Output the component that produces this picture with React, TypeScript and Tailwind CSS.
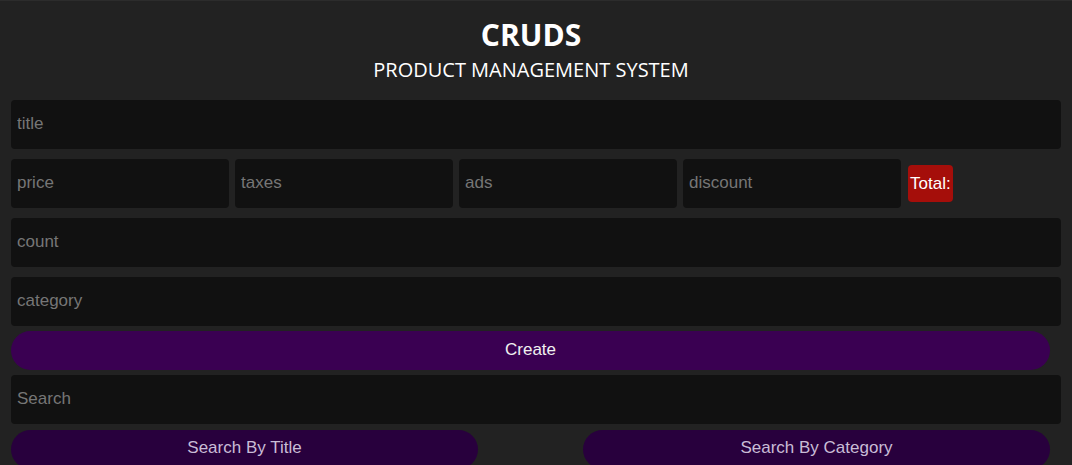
const fields = ['price', 'taxes', 'ads', 'discount'];

function Field({ placeholder, className = '' }: { placeholder: string; className?: string }) {
  return (
    <input
      placeholder={placeholder}
      className={`h-[49px] rounded-[4px] bg-[#111111] px-[6px] pb-[2px] text-[17px] text-[#ddd] placeholder:text-[#767676] outline-none font-['Liberation_Sans',Arial,sans-serif] ${className}`}
    />
  );
}

export default function App() {
  return (
    <div className="min-h-[465px] w-full bg-[#222222] border-t border-[#2c2c2c] overflow-hidden">
      <div className="flex flex-col items-center pt-[15px] pr-[10px] font-['Open_Sans',sans-serif] text-white">
        <h1 className="text-[30px] font-bold leading-[38px]">CRUDS</h1>
        <h2 className="text-[20px] leading-[28px] mt-[2px]">PRODUCT MANAGEMENT SYSTEM</h2>
      </div>

      <div className="mx-[11px] mt-[16px] flex flex-col">
        <Field placeholder="title" className="w-full" />

        <div className="mt-[10px] flex items-center gap-[6px]">
          {fields.map((f) => (
            <Field key={f} placeholder={f} className="w-[218px]" />
          ))}
          <div className="ml-[1px] flex h-[37px] items-center rounded-[4px] bg-[#a50e0a] px-[2px] text-[17px] text-white font-['Liberation_Sans',Arial,sans-serif]">
            Total:
          </div>
        </div>

        <Field placeholder="count" className="mt-[10px] w-full" />
        <Field placeholder="category" className="mt-[10px] w-full" />

        <button className="mt-[5px] h-[39px] w-[1039px] rounded-full bg-[#3a0052] pb-[2px] text-[17px] text-[#f0f0f0] font-['Liberation_Sans',Arial,sans-serif]">
          Create
        </button>

        <Field placeholder="Search" className="mt-[5px] h-[48px] w-full" />

        <div className="mt-[6px] flex w-[1039px] justify-between">
          <button className="h-[39px] w-[467px] rounded-full bg-[#28003d] pb-[4px] text-[17px] text-[#c9bcd6] font-['Liberation_Sans',Arial,sans-serif]">
            Search By Title
          </button>
          <button className="h-[39px] w-[467px] rounded-full bg-[#28003d] pb-[4px] text-[17px] text-[#c9bcd6] font-['Liberation_Sans',Arial,sans-serif]">
            Search By Category
          </button>
        </div>
      </div>
    </div>
  );
}
